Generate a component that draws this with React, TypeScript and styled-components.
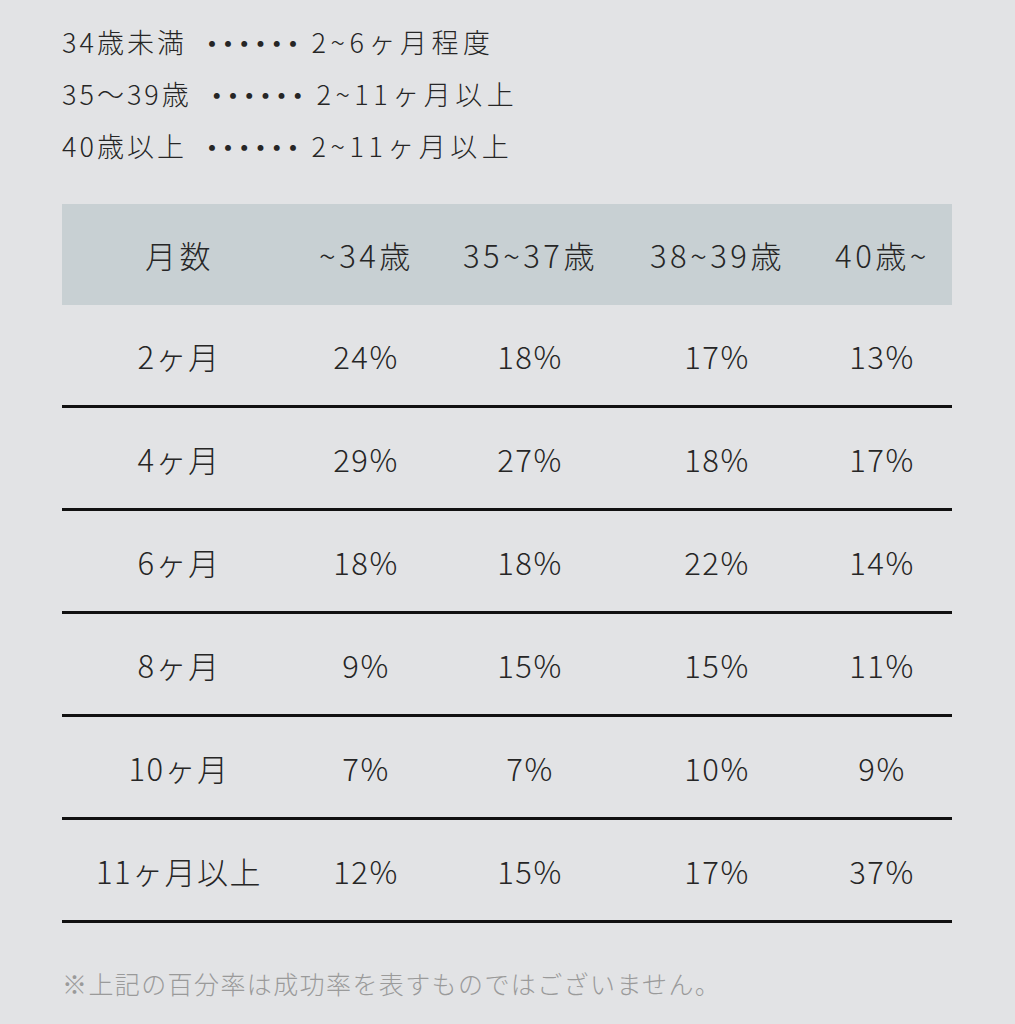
import React from "react";
import styled, { createGlobalStyle } from "styled-components";

const Global = createGlobalStyle`
  html, body {
    margin: 0;
    padding: 0;
    background: #e2e3e5;
  }
  body {
    font-family: "Noto Sans CJK JP", "Noto Sans", sans-serif;
    font-weight: 300;
    color: #262626;
  }
`;

const Page = styled.div`
  padding: 16px 62px 0 62px;
  width: 890px;
`;

const Lines = styled.ul`
  list-style: none;
  margin: 0;
  padding: 0;
`;

const Line = styled.li`
  display: flex;
  align-items: center;
  font-size: 27px;
  line-height: 52px;
  white-space: nowrap;
`;

const Age = styled.span`
  letter-spacing: 3px;
`;

const Period = styled.span`
  letter-spacing: 4.5px;
`;

const Dots = styled.span`
  font-size: 30px;
  font-weight: 700;
  letter-spacing: 1.2px;
  margin: 0 10px 0 17.5px;
`;

const Table = styled.table`
  margin-top: 32px;
  width: 890px;
  border-collapse: collapse;
  table-layout: fixed;
`;

const Head = styled.thead`
  background: #c8d0d3;
`;

const Th = styled.th<{ $w: number }>`
  box-sizing: border-box;
  width: ${(p) => p.$w}px;
  height: 101px;
  padding: 0 0 0 3px;
  font-weight: 300;
  font-size: 31px;
  letter-spacing: 3.5px;
  text-align: center;
  color: #262626;
`;

const Tr = styled.tr`
  border-bottom: 3px solid #111;
`;

const Td = styled.td`
  height: 100px;
  padding: 0 0 0 2px;
  font-size: 31px;
  letter-spacing: 1.5px;
  text-align: center;
`;

const Note = styled.p`
  margin: 40px 0 0 0;
  font-size: 25px;
  letter-spacing: 1.4px;
  line-height: 40px;
  color: #9a9a9a;
  white-space: nowrap;
`;

const heads: [string, number][] = [
  ["月数", 232],
  ["~34歳", 142],
  ["35~37歳", 186],
  ["38~39歳", 188],
  ["40歳~", 142],
];

const rows: string[][] = [
  ["2ヶ月", "24%", "18%", "17%", "13%"],
  ["4ヶ月", "29%", "27%", "18%", "17%"],
  ["6ヶ月", "18%", "18%", "22%", "14%"],
  ["8ヶ月", "9%", "15%", "15%", "11%"],
  ["10ヶ月", "7%", "7%", "10%", "9%"],
  ["11ヶ月以上", "12%", "15%", "17%", "37%"],
];

const items: [string, string][] = [
  ["34歳未満", "2~6ヶ月程度"],
  ["35〜39歳", "2~11ヶ月以上"],
  ["40歳以上", "2~11ヶ月以上"],
];

export default function App() {
  return (
    <>
      <Global />
      <Page>
        <Lines>
          {items.map(([a, b]) => (
            <Line key={a}>
              <Age>{a}</Age>
              <Dots>･･････</Dots>
              <Period>{b}</Period>
            </Line>
          ))}
        </Lines>
        <Table>
          <Head>
            <tr>
              {heads.map(([h, w]) => (
                <Th key={h} $w={w}>
                  {h}
                </Th>
              ))}
            </tr>
          </Head>
          <tbody>
            {rows.map((r) => (
              <Tr key={r[0]}>
                {r.map((c, i) => (
                  <Td key={i}>{c}</Td>
                ))}
              </Tr>
            ))}
          </tbody>
        </Table>
        <Note>※上記の百分率は成功率を表すものではございません。</Note>
      </Page>
    </>
  );
}
